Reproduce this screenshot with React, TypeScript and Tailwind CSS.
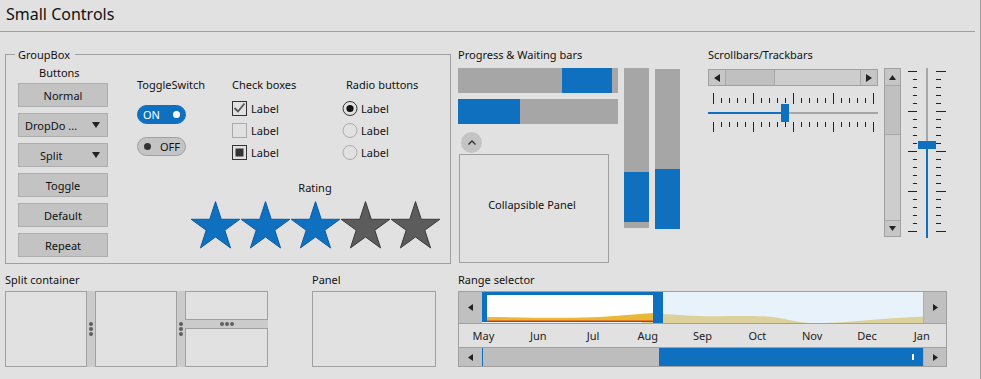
import React from "react";

function Tri({ dir, w, h, color = "#222" }: { dir: "left" | "right" | "up" | "down"; w: number; h: number; color?: string }) {
  const pts =
    dir === "left"
      ? `${w},0 ${w},${h} 0,${h / 2}`
      : dir === "right"
      ? `0,0 0,${h} ${w},${h / 2}`
      : dir === "up"
      ? `0,${h} ${w},${h} ${w / 2},0`
      : `0,0 ${w},0 ${w / 2},${h}`;
  return (
    <svg width={w} height={h} viewBox={`0 0 ${w} ${h}`} className="block shrink-0">
      <polygon points={pts} fill={color} />
    </svg>
  );
}

function Star({ filled }: { filled: boolean }) {
  const R = 25.6;
  const r = R * 0.382;
  const cx = 24.5;
  const cy = 26.2;
  const pts = Array.from({ length: 10 }, (_, k) => {
    const a = ((-90 + 36 * k) * Math.PI) / 180;
    const rr = k % 2 === 0 ? R : r;
    return `${(cx + rr * Math.cos(a)).toFixed(2)},${(cy + rr * Math.sin(a)).toFixed(2)}`;
  }).join(" ");
  return (
    <svg width="49" height="48" viewBox="0 0 49 48" className="block">
      <polygon
        points={pts}
        fill={filled ? "#1070c0" : "#5c5c5c"}
        stroke={filled ? "#0b5aa3" : "#3a3a3a"}
        strokeWidth="1"
      />
    </svg>
  );
}

function Check({ kind }: { kind: "checked" | "empty" | "mixed" }) {
  return (
    <svg width="15" height="15" viewBox="0 0 15 15" className="block shrink-0">
      <rect x="0.5" y="0.5" width="14" height="14" fill="none" stroke={kind === "empty" ? "#ababab" : "#333"} />
      {kind === "checked" && <polyline points="2.5,7 6,10.5 12.5,2.5" fill="none" stroke="#555" strokeWidth="1.8" />}
      {kind === "mixed" && <rect x="3.5" y="3.5" width="8" height="8" fill="#333" />}
    </svg>
  );
}

function Radio({ on }: { on: boolean }) {
  return (
    <svg width="16" height="15" viewBox="0 0 16 15" className="block shrink-0">
      <circle cx="8" cy="7.5" r="7" fill="none" stroke={on ? "#333" : "#ababab"} />
      {on && <circle cx="8" cy="7.5" r="3.6" fill="#111" />}
    </svg>
  );
}

const ticks = Array.from({ length: 21 }, (_, i) => i);
const months = ["May", "Jun", "Jul", "Aug", "Sep", "Oct", "Nov", "Dec", "Jan"];

function VDots() {
  return (
    <div className="flex flex-col gap-[1px]">
      {[0, 1, 2].map((i) => (
        <div key={i} className="w-[4px] h-[4px] rounded-full bg-[#5f5f5f]" />
      ))}
    </div>
  );
}

function HDots() {
  return (
    <div className="flex gap-[1px]">
      {[0, 1, 2].map((i) => (
        <div key={i} className="w-[4px] h-[4px] rounded-full bg-[#5f5f5f]" />
      ))}
    </div>
  );
}

function GroupBox() {
  const btn = "h-[24px] border border-[#adadad] bg-[#c3c3c3] flex items-center";
  return (
    <div className="relative ml-[5px] mt-[7px] w-[446px] h-[210px] border border-[#a0a0a0] flex">
      <span className="absolute left-[9px] top-[-8px] bg-[#e1e1e1] pl-[3px] pr-[5px]">GroupBox</span>

      {/* Buttons */}
      <div className="ml-[12px] w-[90px] pt-[10px]">
        <div className="pl-[21px]">Buttons</div>
        <div className="mt-[3px] flex flex-col gap-[6px]">
          <div className={`${btn} justify-center`}>Normal</div>
          <div className={`${btn} pl-[6px] pr-[7px]`}>
            <span>DropDo ...</span>
            <span className="ml-auto"><Tri dir="down" w={8} h={6} /></span>
          </div>
          <div className={`${btn} pl-[21px] pr-[7px]`}>
            <span>Split</span>
            <span className="ml-auto"><Tri dir="down" w={8} h={6} /></span>
          </div>
          <div className={`${btn} justify-center`}>Toggle</div>
          <div className={`${btn} justify-center`}>Default</div>
          <div className={`${btn} justify-center`}>Repeat</div>
        </div>
      </div>

      <div className="ml-[29px] pt-[22px]">
        <div className="flex h-[83px]">
          {/* Toggle switches */}
          <div className="w-[95px]">
            <div>ToggleSwitch</div>
            <div className="mt-[13px] w-[49px] h-[19px] rounded-full bg-[#1070c0] border border-[#1070c0] flex items-center justify-between pl-[5px] pr-[5px] text-white">
              <span>ON</span>
              <span className="w-[7px] h-[7px] rounded-full bg-white" />
            </div>
            <div className="mt-[13px] w-[49px] h-[19px] rounded-full bg-[#c4c4c4] border border-[#a0a0a0] flex items-center justify-between pl-[6px] pr-[5px]">
              <span className="w-[7px] h-[7px] rounded-full bg-[#333]" />
              <span>OFF</span>
            </div>
          </div>

          {/* Check boxes */}
          <div className="w-[110px]">
            <div>Check boxes</div>
            <div className="mt-[9px] flex flex-col gap-[7px]">
              {(["checked", "empty", "mixed"] as const).map((k) => (
                <div key={k} className="flex items-center h-[15px]">
                  <Check kind={k} />
                  <span className="ml-[4px]">Label</span>
                </div>
              ))}
            </div>
          </div>

          {/* Radio buttons */}
          <div>
            <div className="pl-[4px]">Radio buttons</div>
            <div className="mt-[9px] flex flex-col gap-[7px]">
              {[true, false, false].map((on, i) => (
                <div key={i} className="flex items-center h-[15px]">
                  <Radio on={on} />
                  <span className="ml-[3px]">Label</span>
                </div>
              ))}
            </div>
          </div>
        </div>

        {/* Rating */}
        <div className="mt-[20px] ml-[53px] w-[250px]">
          <div className="text-center">Rating</div>
          <div className="mt-[6px] ml-[1px] flex gap-[1px]">
            {[true, true, true, false, false].map((f, i) => (
              <Star key={i} filled={f} />
            ))}
          </div>
        </div>
      </div>
    </div>
  );
}

function Progress() {
  return (
    <div className="ml-[7px]">
      <div>Progress &amp; Waiting bars</div>
      <div className="flex mt-[6px] items-start">
        <div className="w-[160px]">
          <div className="h-[25px] bg-[#a6a6a6] flex">
            <div className="w-[104px]" />
            <div className="w-[50px] bg-[#1070c0]" />
          </div>
          <div className="mt-[6px] h-[25px] bg-[#a6a6a6] flex">
            <div className="w-[62px] bg-[#1070c0]" />
          </div>
          <div className="mt-[8px] ml-[3px] w-[21px] h-[21px] rounded-full bg-[#c4c4c4] flex items-center justify-center">
            <svg width="8" height="5" viewBox="0 0 8 5" className="block">
              <polyline points="0.5,4.5 4,1 7.5,4.5" fill="none" stroke="#333" strokeWidth="1.4" />
            </svg>
          </div>
          <div className="mt-[1px] ml-[1px] w-[150px] h-[109px] border border-[#a0a0a0] flex items-center justify-center pb-[8px] pr-[4px]">
            Collapsible Panel
          </div>
        </div>
        <div className="ml-[6px] w-[25px] h-[160px] bg-[#a6a6a6] flex flex-col">
          <div className="h-[104px]" />
          <div className="h-[50px] bg-[#1070c0]" />
        </div>
        <div className="ml-[6px] mt-[1px] w-[25px] h-[160px] bg-[#a6a6a6] flex flex-col justify-end">
          <div className="h-[60px] bg-[#1070c0]" />
        </div>
      </div>
    </div>
  );
}

function Scrolls() {
  return (
    <div className="ml-[28px]">
      <div>Scrollbars/Trackbars</div>
      <div className="flex mt-[6px] items-start">
        <div className="w-[170px]">
          <div className="mt-[1px] h-[17px] border border-[#a0a0a0] bg-[#cdcdcd] flex">
            <div className="w-[17px] bg-[#c6c6c6] border-r border-[#a8a8a8] flex items-center justify-center">
              <Tri dir="left" w={6} h={8} />
            </div>
            <div className="w-[49px] bg-[#c0c0c0] border-r border-[#a8a8a8]" />
            <div className="flex-1" />
            <div className="w-[17px] bg-[#c6c6c6] border-l border-[#a8a8a8] flex items-center justify-center">
              <Tri dir="right" w={6} h={8} />
            </div>
          </div>
          <svg width="170" height="40" viewBox="0 0 170 40" className="block mt-[7px]">
            {ticks.map((i) => {
              const long = i % 5 === 0;
              const x = 5 + i * 8;
              return (
                <g key={i}>
                  <rect x={x} y={long ? 0 : 5} width="1" height={long ? 11 : 5} fill="#222" />
                  <rect x={x} y={29} width="1" height={long ? 10 : 5} fill="#222" />
                </g>
              );
            })}
            <rect x="0" y="19" width="73" height="2" fill="#1070c0" />
            <rect x="81" y="19" width="89" height="2" fill="#a6a6a6" />
            <rect x="73" y="11" width="8" height="18" fill="#1070c0" />
          </svg>
        </div>

        <div className="ml-[6px] w-[17px] h-[169px] border border-[#a0a0a0] bg-[#cdcdcd] flex flex-col">
          <div className="h-[17px] bg-[#c6c6c6] border-b border-[#a8a8a8] flex items-center justify-center">
            <Tri dir="up" w={7} h={5} />
          </div>
          <div className="h-[49px] bg-[#c0c0c0] border-b border-[#a8a8a8]" />
          <div className="flex-1" />
          <div className="h-[16px] bg-[#c6c6c6] border-t border-[#a8a8a8] flex items-center justify-center">
            <Tri dir="down" w={7} h={5} />
          </div>
        </div>

        <svg width="38" height="170" viewBox="0 0 38 170" className="block ml-[7px]">
          {ticks.map((i) => {
            const long = i % 5 === 0;
            const y = 3 + i * 8;
            return (
              <g key={i}>
                <rect x={long ? 0 : 5} y={y} width={long ? 9 : 4} height="1" fill="#222" />
                <rect x="28" y={y} width={long ? 10 : 5} height="1" fill="#222" />
              </g>
            );
          })}
          <rect x="18" y="0" width="2" height="73" fill="#a6a6a6" />
          <rect x="18" y="81" width="2" height="89" fill="#1070c0" />
          <rect x="10" y="73" width="18" height="8" fill="#1070c0" />
        </svg>
      </div>
    </div>
  );
}

function RangeSelector() {
  return (
    <div className="ml-[22px]">
      <div>Range selector</div>
      <div className="mt-[4px] w-[489px] h-[76px] border border-[#a0a0a0] flex flex-col">
        <div className="flex h-[31px]">
          <div className="w-[23px] bg-[#c0c0c0] flex items-center justify-center">
            <Tri dir="left" w={5} h={7} />
          </div>
          <svg width="441" height="31" viewBox="0 0 441 31" className="block">
            <rect width="441" height="31" fill="#e8f2fb" />
            <path
              d="M160,31 L160,21.5 C195,22 205,24.3 230,24.2 C250,24 265,23.5 285,24.5 C300,25.5 312,30 328,31 L340,31 C360,30.5 380,28.5 400,27 C420,25.8 432,25 441,24.6 L441,31 Z"
              fill="#ddd19b"
            />
            <rect x="0" y="0" width="172" height="30" fill="#1070c0" />
            <rect x="5" y="3" width="166" height="26" fill="#ffffff" />
            <path d="M5,29 L5,25 C30,25.2 60,26 90,25.8 C120,25.5 145,23 171,21 L171,29 Z" fill="#e9b935" />
            <rect x="5" y="28" width="166" height="1" fill="#e07a2e" />
            <rect x="171" y="0" width="10" height="31" fill="#1070c0" />
          </svg>
          <div className="w-[23px] bg-[#c0c0c0] border-l border-[#b0b0b0] flex items-center justify-center">
            <Tri dir="right" w={5} h={7} />
          </div>
        </div>
        <div className="h-[25px] border-y border-[#a0a0a0] flex items-center">
          <div className="ml-[-3px] flex">
            {months.map((m) => (
              <div key={m} className="w-[54.8px] text-center text-[#222]">
                {m}
              </div>
            ))}
          </div>
        </div>
        <div className="flex h-[18px]">
          <div className="w-[23px] bg-[#c0c0c0] flex items-center justify-center">
            <Tri dir="left" w={5} h={7} />
          </div>
          <div className="w-px bg-[#1070c0]" />
          <div className="w-[176px] bg-[#bdbdbd]" />
          <div className="w-[264px] bg-[#1070c0] flex items-center justify-end pr-[9px]">
            <div className="w-[2px] h-[6px] bg-white" />
          </div>
          <div className="w-[23px] bg-[#c0c0c0] border-l border-[#b0b0b0] flex items-center justify-center">
            <Tri dir="right" w={5} h={7} />
          </div>
        </div>
      </div>
    </div>
  );
}

export default function App() {
  return (
    <div className="w-[981px] h-[379px] overflow-hidden bg-[#e1e1e1] border-r border-[#a0a0a0] font-['Noto_Sans',sans-serif] text-[11px] leading-[15px] text-[#111]">
      <div className="h-[31px] pl-[6px] pt-[3px] text-[16px] leading-[22px]">Small Controls</div>
      <div className="h-px w-[975px] bg-[#a0a0a0]" />

      <div className="flex items-start mt-[15px]">
        <GroupBox />
        <Progress />
        <Scrolls />
      </div>

      <div className="flex items-start mt-[8px]">
        <div className="ml-[5px]">
          <div>Split container</div>
          <div className="mt-[4px] flex h-[76px]">
            <div className="w-[82px] border border-[#a0a0a0]" />
            <div className="w-[8px] bg-[#cbcbcb] flex items-center justify-center">
              <VDots />
            </div>
            <div className="w-[82px] border border-[#a0a0a0]" />
            <div className="w-[8px] bg-[#cbcbcb] flex items-center justify-center">
              <VDots />
            </div>
            <div className="w-[83px] flex flex-col">
              <div className="h-[29px] border border-[#a0a0a0]" />
              <div className="h-[8px] bg-[#cbcbcb] flex items-center justify-center">
                <HDots />
              </div>
              <div className="h-[39px] border border-[#a0a0a0]" />
            </div>
          </div>
        </div>

        <div className="ml-[44px]">
          <div>Panel</div>
          <div className="mt-[4px] w-[124px] h-[76px] border border-[#a0a0a0]" />
        </div>

        <RangeSelector />
      </div>
    </div>
  );
}
